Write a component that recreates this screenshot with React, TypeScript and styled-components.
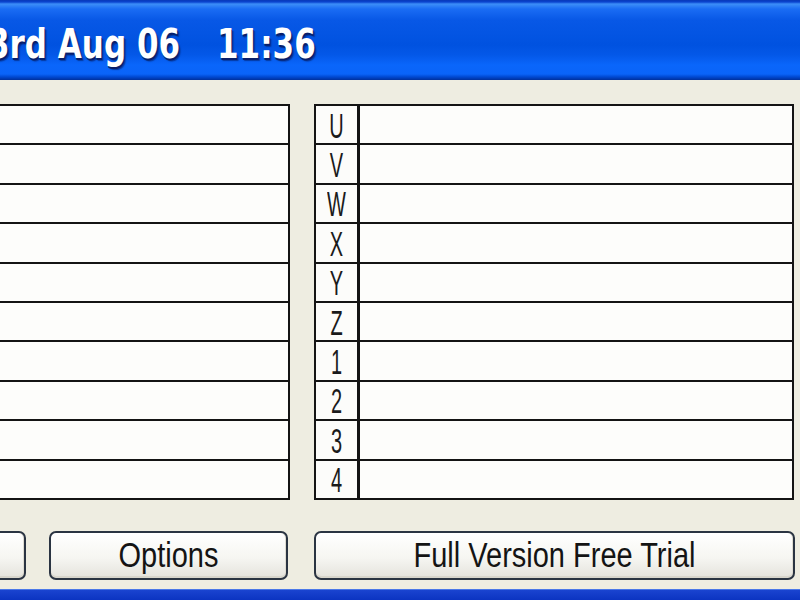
import React from "react";
import styled, { createGlobalStyle } from "styled-components";

const Global = createGlobalStyle`
  html, body { margin: 0; padding: 0; }
  body { background: #eeede1; overflow: hidden; }
  #root { width: 800px; height: 600px; }
`;

const Page = styled.div`
  width: 800px;
  height: 600px;
  display: flex;
  flex-direction: column;
  background: #eeede1;
  overflow: hidden;
`;

const TitleBar = styled.div`
  height: 80px;
  flex: none;
  display: flex;
  align-items: center;
  padding-top: 8px;
  box-sizing: border-box;
  background: linear-gradient(
    to bottom,
    #0838b8 0px,
    #0a44d0 2px,
    #3c8ef8 4px,
    #1a6cf4 9px,
    #0858e6 20px,
    #0052e0 45px,
    #0458e8 55px,
    #0a66fb 65px,
    #0a64f8 74px,
    #0048d0 77px,
    #00309c 80px
  );
`;

const TitleText = styled.span<{ $offset: number }>`
  display: inline-block;
  margin-left: ${(p) => p.$offset}px;
  font-family: "DejaVu Sans", Verdana, sans-serif;
  font-weight: bold;
  font-size: 31px;
  color: #ffffff;
  white-space: pre;
  text-shadow: 1px 1px 0 #0a1f6a, 2px 2px 1px rgba(0, 20, 80, 0.5);
  transform: scaleY(1.3);
  transform-origin: left center;
`;

const Body = styled.div`
  flex: 1;
  display: flex;
  flex-direction: column;
  padding-top: 24px;
`;

const Tables = styled.div`
  display: flex;
  height: 396px;
`;

const Panel = styled.div<{ $left: number; $width: number }>`
  margin-left: ${(p) => p.$left}px;
  width: ${(p) => p.$width}px;
  height: 396px;
  box-sizing: border-box;
  border: 2px solid #141414;
  background: #141414;
  display: grid;
  grid-template-rows: repeat(10, 1fr);
  row-gap: 2px;
`;

const Row = styled.div<{ $labelled: boolean }>`
  display: grid;
  grid-template-columns: ${(p) => (p.$labelled ? "41px 3px 1fr" : "1fr")};
  background: #141414;
`;

const LabelCell = styled.div`
  background: #fcfcfa;
  display: flex;
  align-items: center;
  justify-content: center;
  overflow: hidden;
`;

const Label = styled.span`
  font-family: "Liberation Sans", Arial, sans-serif;
  font-size: 20px;
  color: #1a1a1a;
  display: inline-block;
  transform: scaleY(1.8);
  line-height: 1;
`;

const ValueCell = styled.div`
  background: #fdfdfb;
`;

const Buttons = styled.div`
  display: flex;
  margin-top: 31px;
  height: 49px;
`;

const Button = styled.button<{ $left: number; $width: number }>`
  margin-left: ${(p) => p.$left}px;
  width: ${(p) => p.$width}px;
  height: 49px;
  box-sizing: border-box;
  padding: 0;
  border: 2px solid #2a3442;
  border-radius: 7px;
  background: linear-gradient(to bottom, #ffffff 0%, #f6f6f2 55%, #e4e3dc 100%);
  box-shadow: inset 0 -2px 0 #d8d6cc, inset -1px 0 0 #dedcd2;
  display: flex;
  align-items: center;
  justify-content: center;
`;

const ButtonText = styled.span`
  font-family: "Liberation Sans", Arial, sans-serif;
  font-size: 29px;
  color: #141414;
  display: inline-block;
  transform: scaleY(1.2);
  line-height: 1;
  white-space: pre;
`;

const BottomBar = styled.div`
  margin-top: 9px;
  height: 11px;
  border-top: 1px solid #4a78e8;
  background: linear-gradient(to bottom, #1a44d0, #0a32c0);
`;

const labels = ["U", "V", "W", "X", "Y", "Z", "1", "2", "3", "4"];

export default function App() {
  return (
    <Page>
      <Global />
      <TitleBar>
        <TitleText $offset={-12}>3rd Aug 06</TitleText>
        <TitleText $offset={37}>11:36</TitleText>
      </TitleBar>
      <Body>
        <Tables>
          <Panel $left={-10} $width={300}>
            {labels.map((l) => (
              <Row key={l} $labelled={false}>
                <ValueCell />
              </Row>
            ))}
          </Panel>
          <Panel $left={24} $width={480}>
            {labels.map((l) => (
              <Row key={l} $labelled={true}>
                <LabelCell>
                  <Label>{l}</Label>
                </LabelCell>
                <div />
                <ValueCell />
              </Row>
            ))}
          </Panel>
        </Tables>
        <Buttons>
          <Button $left={-100} $width={126} />
          <Button $left={23} $width={239}>
            <ButtonText>Options</ButtonText>
          </Button>
          <Button $left={26} $width={481}>
            <ButtonText>Full Version Free Trial</ButtonText>
          </Button>
        </Buttons>
        <BottomBar />
      </Body>
    </Page>
  );
}
